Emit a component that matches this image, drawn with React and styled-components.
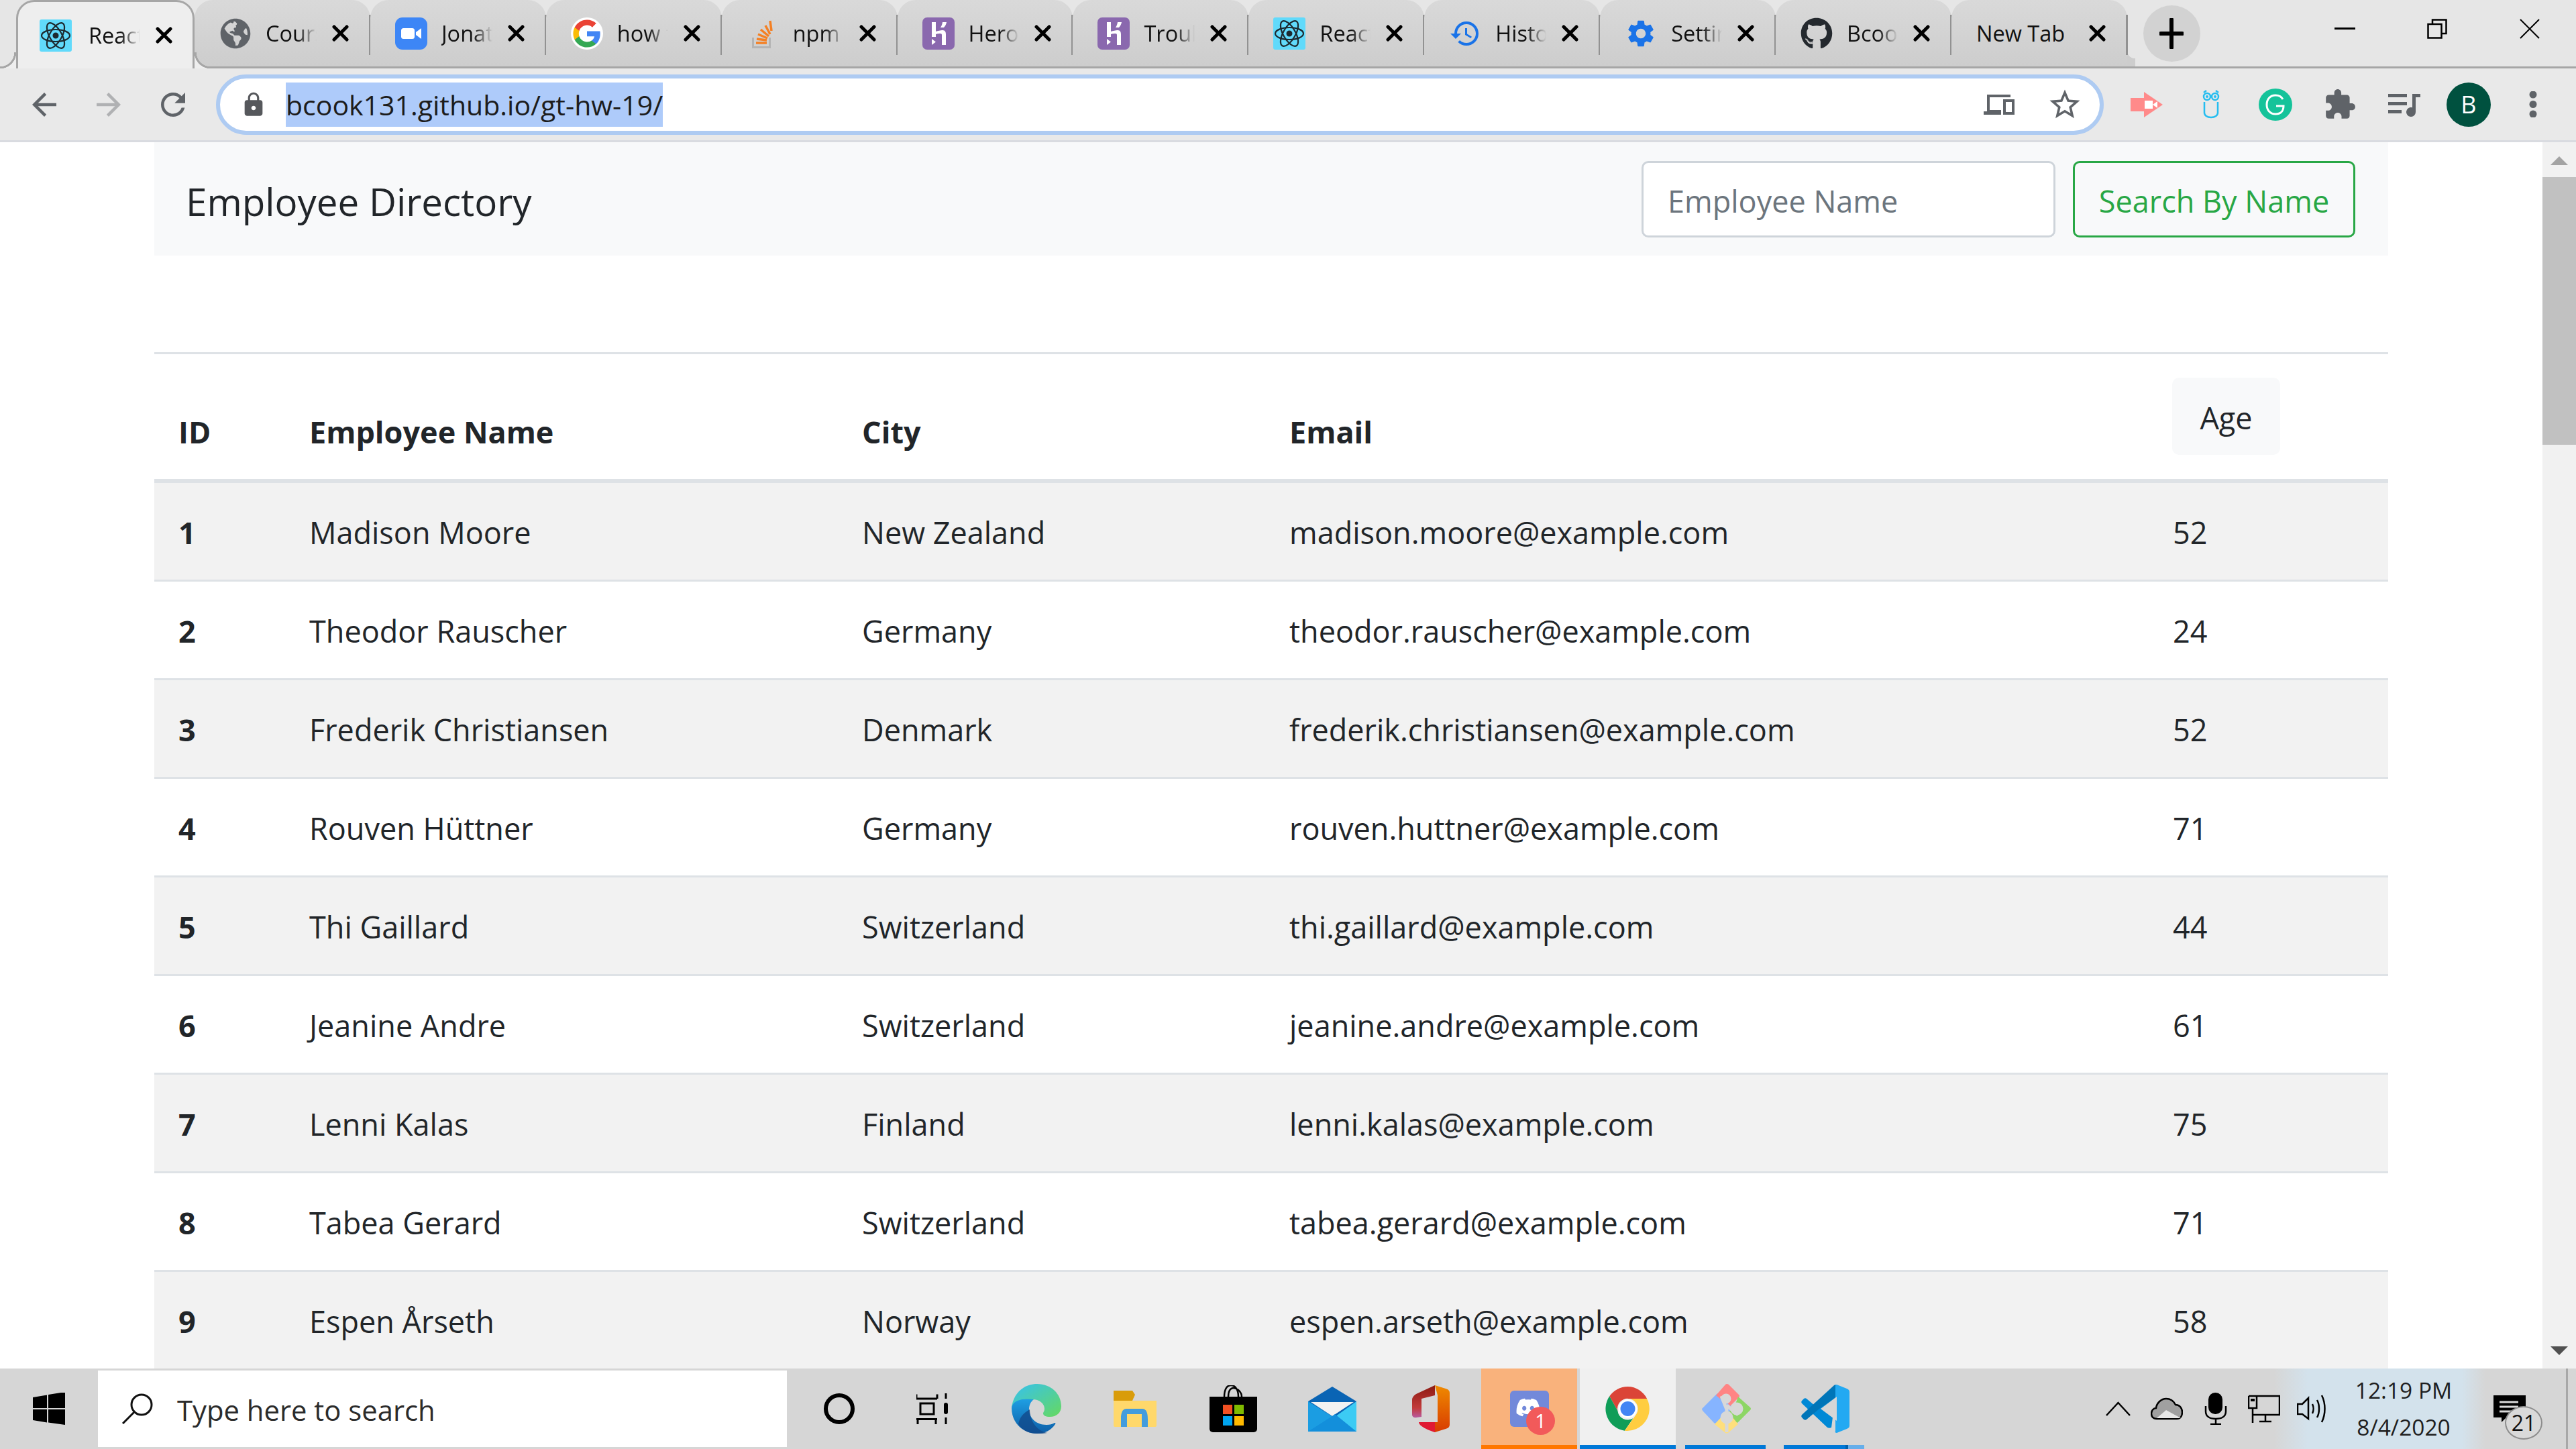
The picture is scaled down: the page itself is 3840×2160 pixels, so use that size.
import React from 'react';
import styled, { createGlobalStyle } from 'styled-components';
import { FaGithub, FaGlobeAmericas, FaDiscord } from 'react-icons/fa';
import { MdSettings, MdHistory, MdLock } from 'react-icons/md';

const GlobalStyle = createGlobalStyle`
  * {
    box-sizing: border-box;
  }
  html,
  body {
    margin: 0;
    height: 100%;
    overflow: hidden;
    background: #fff;
    font-family: 'Open Sans', 'Noto Sans', sans-serif;
    color: #212529;
  }
`;

const Screen = styled.div`
  height: 100vh;
  display: flex;
  flex-direction: column;
`;

/* browser tab strip */
const TabStrip = styled.div`
  flex: none;
  height: 102px;
  display: flex;
  padding-left: 24px;
  background: #e6e6e6;
  border-bottom: 3px solid #a6a6a6;
`;

const Tab = styled.div`
  position: relative;
  flex: none;
  display: flex;
  align-items: center;
  width: ${({ $active }) => ($active ? '266px' : '261.9px')};
  padding: ${({ $active }) => ($active ? '0 30px 0 32px' : '0 32px 0 37px')};
  margin-bottom: ${({ $active }) => ($active ? '-3px' : '0')};
  border-radius: 27px 27px 0 0;
  background: ${({ $active }) =>
    $active ? '#eeeeee' : 'linear-gradient(#d9d9d9, #cdcdcd)'};
  border: ${({ $active }) => ($active ? '3px solid #a6a6a6' : '0')};
  border-bottom: 0;
  z-index: ${({ $active }) => ($active ? 2 : 1)};

  &::after {
    content: '';
    position: absolute;
    display: ${({ $active }) => ($active ? 'none' : 'block')};
    right: -1px;
    top: 22px;
    width: 3px;
    height: 60px;
    background: #929292;
  }
  &:last-of-type::after {
    display: none;
  }
`;

const FlareLeft = styled.span`
  position: absolute;
  left: -27px;
  bottom: 0;
  width: 24px;
  height: 24px;
  background: radial-gradient(
    circle at 0 0,
    transparent 21px,
    #a6a6a6 21.5px,
    #a6a6a6 24px,
    #eeeeee 24.5px
  );
`;

const FlareRight = styled.span`
  position: absolute;
  right: -27px;
  bottom: 0;
  width: 24px;
  height: 24px;
  background: radial-gradient(
    circle at 100% 0,
    transparent 21px,
    #a6a6a6 21.5px,
    #a6a6a6 24px,
    #eeeeee 24.5px
  );
`;

const LastFlare = styled.span`
  position: absolute;
  right: -12px;
  bottom: 0;
  width: 12px;
  height: 24px;
  background: radial-gradient(circle at 100% 0, transparent 12px, #cdcdcd 12.5px);
`;

const Favicon = styled.span`
  flex: none;
  width: 48px;
  height: 48px;
  margin-right: ${({ $active }) => ($active ? '25px' : '21px')};
  display: flex;
  align-items: center;
  justify-content: center;
  color: ${({ $color }) => $color || '#5f6368'};
`;

const TabTitle = styled.span`
  flex: 1;
  min-width: 0;
  overflow: hidden;
  white-space: nowrap;
  font-size: 32.5px;
  line-height: 48px;
  color: #111;
  mask-image: ${({ $fade }) =>
    $fade ? 'linear-gradient(90deg, #000 62%, transparent 100%)' : 'none'};
`;

const CloseMark = styled.svg`
  flex: none;
  width: 25px;
  height: 25px;
  margin-left: 23px;
`;

const NewTabButton = styled.div`
  flex: none;
  width: 85px;
  height: 84px;
  margin: 8px 0 0 24px;
  border-radius: 50%;
  background: #d2d2d2;
  display: flex;
  align-items: center;
  justify-content: center;
`;

const WindowControls = styled.div`
  margin-left: auto;
  display: flex;
`;

const WindowButton = styled.div`
  width: 138px;
  height: 86px;
  display: flex;
  align-items: center;
  justify-content: center;
`;

/* address bar row */
const Toolbar = styled.div`
  flex: none;
  height: 110px;
  display: flex;
  align-items: center;
  padding: 0 16px 0 18px;
  background: #e9e9e9;
  border-bottom: 3px solid #d9dbe0;
`;

const ToolSlot = styled.div`
  flex: none;
  width: 96px;
  display: flex;
  align-items: center;
  justify-content: center;
`;

const AddressBar = styled.div`
  flex: 1;
  height: 90px;
  margin: 0 16px;
  display: flex;
  align-items: center;
  padding: 0 3px 0 30px;
  background: #fff;
  border: 6px solid #aecbf2;
  border-radius: 45px;
`;

const LockSlot = styled.span`
  flex: none;
  width: 40px;
  margin-right: 28px;
  display: flex;
  justify-content: center;
  color: #56585c;
`;

const Url = styled.span`
  background: #aecbfa;
  font-size: 41px;
  line-height: 66px;
  color: #1c1c1c;
  white-space: nowrap;
`;

const AddressActions = styled.div`
  margin-left: auto;
  display: flex;
  align-items: center;
`;

const AddressAction = styled.div`
  width: 98px;
  display: flex;
  justify-content: center;
`;

const Avatar = styled.div`
  width: 66px;
  height: 66px;
  border-radius: 50%;
  background: #00513f;
  color: #fff;
  font-size: 36px;
  line-height: 66px;
  text-align: center;
`;

/* page */
const Viewport = styled.div`
  flex: 1;
  min-height: 0;
  display: flex;
  overflow: hidden;
`;

const Page = styled.div`
  flex: 1;
  min-width: 0;
  padding: 0 230px;
`;

const Navbar = styled.div`
  height: 169px;
  display: flex;
  align-items: flex-start;
  padding: 28px 49px 0 47px;
  background: #f8f9fa;
`;

const Brand = styled.div`
  margin-right: auto;
  font-size: 56.5px;
  line-height: 122px;
`;

const NameInput = styled.input`
  width: 617px;
  height: 114px;
  padding: 4px 36px 0;
  background: #fff;
  border: 3px solid #ced4da;
  border-radius: 10px;
  font-family: inherit;
  font-size: 45px;
  color: #495057;
  outline: none;

  &::placeholder {
    color: #6c757d;
    opacity: 1;
  }
`;

const SearchButton = styled.button`
  width: 421px;
  height: 114px;
  margin-left: 26px;
  padding: 4px 0 0;
  background: transparent;
  border: 3px solid #28a745;
  border-radius: 10px;
  font-family: inherit;
  font-size: 45px;
  white-space: nowrap;
  color: #28a745;
`;

const Table = styled.table`
  width: 100%;
  margin-top: 144px;
  table-layout: fixed;
  border-collapse: separate;
  border-spacing: 0;
  font-size: 45px;
`;

const HeadCell = styled.th`
  width: ${({ $width }) => $width}px;
  height: 195px;
  padding: 0 34px 45px;
  border-top: 3px solid #dee2e6;
  border-bottom: 6px solid #dee2e6;
  text-align: left;
  vertical-align: bottom;
  font-weight: 700;
  line-height: 50px;

  &:first-child,
  &:last-child {
    padding-left: 36px;
  }
`;

const SortButton = styled.button`
  display: block;
  width: 161px;
  height: 115px;
  margin-bottom: -9px;
  margin-left: -1px;
  padding: 4px 0 0;
  background: #f8f9fa;
  border: 0;
  border-radius: 10px;
  font-family: inherit;
  font-size: 45px;
  color: #212529;
`;

const Row = styled.tr`
  background: ${({ $odd }) => ($odd ? '#f2f2f2' : '#fff')};

  & > td {
    height: 147px;
    border-top: 3px solid #dee2e6;
  }
  &:first-child > td {
    height: 144px;
    border-top: 0;
  }
`;

const Cell = styled.td`
  padding: 4px 34px 0;
  font-weight: ${({ $bold }) => ($bold ? 700 : 400)};
  line-height: 50px;
  white-space: nowrap;

  &:first-child,
  &:last-child {
    padding-left: 36px;
  }
`;

const Scrollbar = styled.div`
  flex: none;
  width: 50px;
  display: flex;
  flex-direction: column;
  align-items: center;
  padding: 21px 0 20px;
  background: #f1f1f1;
`;

const ScrollArrow = styled.div`
  flex: none;
  width: 0;
  height: 0;
  border-left: 13px solid transparent;
  border-right: 13px solid transparent;
  border-bottom: ${({ $up }) => ($up ? '13px solid #a3a3a3' : '0')};
  border-top: ${({ $up }) => ($up ? '0' : '13px solid #505050')};
`;

const ScrollThumb = styled.div`
  flex: none;
  width: 100%;
  height: 399px;
  margin: 18px 0 auto;
  background: #c1c1c1;
`;

/* windows taskbar */
const Taskbar = styled.div`
  position: relative;
  flex: none;
  height: 120px;
  display: flex;
  align-items: stretch;
  background: linear-gradient(
      90deg,
      transparent 3390px,
      #d3e2ec 3440px,
      #d3e2ec 3670px,
      transparent 3705px
    ),
    #d6d6d6;
`;

const StartSlot = styled.div`
  flex: none;
  width: 146px;
  display: flex;
  align-items: center;
  justify-content: center;
`;

const SearchBox = styled.div`
  flex: none;
  width: 1027px;
  margin: 3px 4px 3px 0;
  padding: 0 0 0 35px;
  display: flex;
  align-items: center;
  background: #fff;
`;

const SearchText = styled.span`
  margin: 2px 0 0 36px;
  font-size: 41.8px;
  color: #2b2b2b;
`;

const TaskSlot = styled.div`
  position: relative;
  flex: none;
  width: 147px;
  display: flex;
  align-items: center;
  justify-content: center;
  background: ${({ $state }) =>
    $state === 'flash' ? '#f9b27c' : $state === 'active' ? '#f0f0f0' : 'transparent'};
  border-left: ${({ $state }) =>
    $state === 'flash' || $state === 'active' ? '2px solid #d6d6d6' : '0'};
  border-right: ${({ $state }) =>
    $state === 'flash' || $state === 'active' ? '2px solid #d6d6d6' : '0'};

  &::after {
    content: '';
    position: absolute;
    display: ${({ $state }) => ($state ? 'block' : 'none')};
    bottom: 0;
    left: ${({ $state }) => ($state === 'running' || $state === 'wide' ? '12px' : '0')};
    right: ${({ $state }) => ($state === 'running' || $state === 'wide' ? '15px' : '0')};
    height: 6px;
    background: ${({ $state }) =>
      $state === 'flash'
        ? '#ff7700'
        : $state === 'wide'
          ? 'linear-gradient(90deg, #0078d7 77%, #0060ad 77%, #0060ad 80%, #66aeea 80%)'
          : '#0078d7'};
  }
`;

const DiscordGlyph = styled(FaDiscord)`
  position: absolute;
  left: 51px;
  top: 39px;
  color: #fff;
`;

const DiscordBadge = styled.span`
  position: absolute;
  left: 67px;
  top: 57px;
  width: 43px;
  height: 42px;
  border-radius: 50%;
  background: #f25a5a;
  color: #fff;
  font-size: 30px;
  line-height: 42px;
  text-align: center;
`;

const TrayIcons = styled.div`
  margin-left: auto;
  display: flex;
  align-items: stretch;
`;

const TraySlot = styled.div`
  width: 72.5px;
  display: flex;
  align-items: center;
  justify-content: center;
`;

const Clock = styled.div`
  width: 198px;
  display: flex;
  flex-direction: column;
  align-items: center;
  justify-content: center;
  font-size: 33.5px;
  line-height: 55px;
  color: #1f1f1f;
`;

const NotifySlot = styled.div`
  position: relative;
  width: 158px;
  padding-right: 40px;
  display: flex;
  align-items: center;
  justify-content: center;

  &::after {
    content: '';
    position: absolute;
    right: 12px;
    top: 0;
    bottom: 0;
    width: 3px;
    background: #a8a8a8;
  }
`;

const NotifyBadge = styled.span`
  position: absolute;
  left: 52px;
  top: 56px;
  width: 56px;
  height: 50px;
  border-radius: 50%;
  border: 2px solid #8d8d8d;
  background: #d9d9d9;
  color: #111;
  font-size: 32px;
  line-height: 46px;
  text-align: center;
`;

/* drawings */
const ReactIcon = () => (
  <svg width="48" height="48" viewBox="0 0 48 48">
    <rect width="48" height="48" rx="3" fill="#61dafb" />
    <g fill="none" stroke="#1d2a30" strokeWidth="2.2">
      <ellipse cx="24" cy="24" rx="21" ry="9" />
      <ellipse cx="24" cy="24" rx="21" ry="9" transform="rotate(60 24 24)" />
      <ellipse cx="24" cy="24" rx="21" ry="9" transform="rotate(120 24 24)" />
    </g>
    <circle cx="24" cy="24" r="4.5" fill="#1d2a30" />
  </svg>
);

const ZoomIcon = () => (
  <svg width="48" height="48" viewBox="0 0 48 48">
    <rect width="48" height="48" rx="11" fill="#3d86f6" />
    <rect x="9" y="16" width="20" height="16" rx="3.500" fill="#fff" />
    <path d="M31 22l8-6v16l-8-6z" fill="#fff" />
  </svg>
);

const GoogleIcon = () => (
  <svg width="48" height="48" viewBox="-2 -2 28 28">
    <circle cx="12" cy="12" r="14" fill="#fff" />
    <path fill="#4285F4" d="M23.49 12.27c0-.79-.07-1.54-.19-2.27H12v4.51h6.47c-.29 1.48-1.14 2.73-2.4 3.58v3h3.86c2.26-2.09 3.56-5.17 3.56-8.82z" />
    <path fill="#34A853" d="M12 24c3.24 0 5.95-1.08 7.93-2.91l-3.86-3c-1.08.72-2.45 1.16-4.07 1.16-3.13 0-5.78-2.11-6.73-4.96H1.29v3.09C3.26 21.3 7.31 24 12 24z" />
    <path fill="#FBBC05" d="M5.27 14.29c-.25-.72-.38-1.49-.38-2.29s.14-1.57.38-2.29V6.62H1.29C.47 8.24 0 10.06 0 12s.47 3.76 1.29 5.38l3.98-3.09z" />
    <path fill="#EA4335" d="M12 4.75c1.77 0 3.35.61 4.6 1.8l3.42-3.42C17.95 1.19 15.24 0 12 0 7.31 0 3.26 2.7 1.29 6.62l3.98 3.09C6.22 6.86 8.87 4.75 12 4.75z" />
  </svg>
);

const StackIcon = () => (
  <svg width="48" height="48" viewBox="0 0 48 48">
    <path d="M8 30v16h28V30h-3v13H11V30z" fill="#b4b4b4" />
    <g stroke="#f48024" strokeWidth="3.500">
      <path d="M14 38h16" />
      <path d="M15 32l15 2" />
      <path d="M17 25l14 6" />
      <path d="M21 18l12 10" />
      <path d="M28 12l7 13" />
      <path d="M35 5l2 15" />
    </g>
  </svg>
);

const HerokuIcon = () => (
  <svg width="48" height="48" viewBox="0 0 48 48">
    <rect width="48" height="48" rx="7" fill="#8a68ae" />
    <path d="M14 7h6v14c3-1 7-2 10-2 4 0 5 3 5 6v16h-6V26c0-2-2-2-3-2-3 0-6 1-6 1v4l-6 0z" fill="#fff" />
    <path d="M30 7h6c-.5 3-2 6-4 8h-5c1.500-2 2.500-5 3-8zM14 41v-9l6 4.500z" fill="#fff" />
  </svg>
);

const Cross = () => (
  <CloseMark viewBox="0 0 25 25">
    <path d="M3 3l19 19M22 3L3 22" stroke="#000" strokeWidth="5" strokeLinecap="round" />
  </CloseMark>
);

const GreyIcon = ({ d, size = 48, color = '#5f6368' }) => (
  <svg width={size} height={size} viewBox="0 0 24 24">
    <path d={d} fill={color} />
  </svg>
);

const BACK = 'M20 11H7.83l5.59-5.59L12 4l-8 8 8 8 1.41-1.41L7.83 13H20v-2z';
const FORWARD = 'M12 4l-1.41 1.41L16.17 11H4v2h12.17l-5.58 5.59L12 20l8-8z';
const RELOAD = 'M17.65 6.35A7.958 7.958 0 0 0 12 4c-4.42 0-7.99 3.58-7.99 8s3.57 8 7.99 8c3.73 0 6.84-2.55 7.73-6h-2.08A5.99 5.99 0 0 1 12 18c-3.31 0-6-2.69-6-6s2.69-6 6-6c1.66 0 3.14.69 4.22 1.78L13 11h7V4l-2.35 2.35z';
const STAR = 'M22 9.24l-7.19-.62L12 2 9.19 8.63 2 9.24l5.46 4.73L5.82 21 12 17.27 18.18 21l-1.63-7.03L22 9.24zM12 15.4l-3.76 2.27 1-4.28-3.32-2.88 4.38-.38L12 6.1l1.71 4.04 4.38.38-3.32 2.88 1 4.28L12 15.4z';
const PUZZLE = 'M20.5 11H19V7c0-1.1-.9-2-2-2h-4V3.5C13 2.12 11.88 1 10.5 1S8 2.12 8 3.5V5H4c-1.1 0-1.99.9-1.99 2v3.8H3.5c1.49 0 2.7 1.21 2.7 2.7s-1.21 2.7-2.7 2.7H2V20c0 1.1.9 2 2 2h3.8v-1.500c0-1.49 1.21-2.7 2.7-2.7 1.49 0 2.7 1.21 2.7 2.7V22H17c1.1 0 2-.9 2-2v-4h1.500c1.38 0 2.500-1.12 2.500-2.500S21.880 11 20.500 11z';

const DevicesIcon = () => (
  <svg width="46" height="30" viewBox="0 0 46 30">
    <path d="M5 0h35v4H9v19h17v7H0v-5h5z" fill="#5f6368" />
    <path fillRule="evenodd" d="M29 7h17v23H29zM33 11v15h9V11z" fill="#5f6368" />
  </svg>
);

const CamExtension = () => (
  <svg width="48" height="38" viewBox="0 0 48 38">
    <path d="M20 0l28 19-28 19v-9H0V9h20z" fill="#ff8a8a" />
    <path d="M21 13h12v12H21zM33 19l7-5v10z" fill="#fff" />
  </svg>
);

const OwlExtension = () => (
  <svg width="26" height="43" viewBox="0 0 26 43">
    <g fill="none" stroke="#25bdf0" strokeWidth="2.500">
      <circle cx="7" cy="10" r="5" />
      <circle cx="19" cy="10" r="5" />
      <path d="M2 4l4-3M24 4l-4-3" />
      <path d="M3 18v16c0 4 4 7 10 7s10-3 10-7V18" />
    </g>
    <circle cx="7" cy="10" r="2" fill="#25bdf0" />
    <circle cx="19" cy="10" r="2" fill="#25bdf0" />
  </svg>
);

const GrammarlyIcon = () => (
  <svg width="50" height="48" viewBox="0 0 50 48">
    <ellipse cx="25" cy="24" rx="25" ry="24" fill="#15c39a" />
    <path d="M36 16c-2-4-6-6-11-6-8 0-13 6-13 14s5 14 13 14 12-5 12-12H26" fill="none" stroke="#fff" strokeWidth="3" />
  </svg>
);

const MediaIcon = () => (
  <svg width="48" height="36" viewBox="0 0 48 36">
    <path d="M0 2h28v5H0zM0 14h28v5H0zM0 26h20v5H0z" fill="#5f6368" />
    <path d="M36 2h12v5h-7v22a7 7 0 1 1-5-6.700z" fill="#5f6368" />
  </svg>
);

const DotsIcon = () => (
  <svg width="12" height="39" viewBox="0 0 12 39">
    <circle cx="6" cy="5" r="5.500" fill="#5f6368" />
    <circle cx="6" cy="19.500" r="5.500" fill="#5f6368" />
    <circle cx="6" cy="34" r="5.500" fill="#5f6368" />
  </svg>
);

const WindowsLogo = () => (
  <svg width="48" height="48" viewBox="0 0 48 48">
    <path d="M0 7l21-3.500V23H0zM23 3l25-4v24H23zM0 25h21v19.500L0 41zM23 25h25v23l-25-3.500z" fill="#000" />
  </svg>
);

const Magnifier = () => (
  <svg width="47" height="46" viewBox="0 0 47 46">
    <circle cx="30" cy="17" r="15" fill="none" stroke="#111" strokeWidth="3" />
    <path d="M19 28L2 45" stroke="#111" strokeWidth="3" />
  </svg>
);

const CortanaRing = () => (
  <svg width="48" height="48" viewBox="0 0 48 48">
    <circle cx="24" cy="24" r="20" fill="none" stroke="#000" strokeWidth="6" />
  </svg>
);

const TaskViewIcon = () => (
  <svg width="63" height="46" viewBox="0 0 63 46">
    <g fill="none" stroke="#000" strokeWidth="3">
      <path d="M0 8h31M0 1.500v6.500M31 1.500v6.500" />
      <rect x="6" y="15" width="20" height="16" />
      <path d="M0 38.500h31M2 38.500v8M29 38.500v8" />
      <path d="M44 0v8M44 36v10" />
    </g>
    <rect x="41" y="14" width="6" height="17" rx="3" fill="#000" />
  </svg>
);

const EdgeIcon = () => (
  <svg width="74" height="74" viewBox="0 0 74 74">
    <defs>
      <linearGradient id="edgeTop" x1="0" y1="0" x2="1" y2="1">
        <stop offset="0" stopColor="#35c1f1" />
        <stop offset="1" stopColor="#66d95f" />
      </linearGradient>
      <linearGradient id="edgeLow" x1="0" y1="0" x2="0" y2="1">
        <stop offset="0" stopColor="#1f9fe3" />
        <stop offset="1" stopColor="#0c5ea8" />
      </linearGradient>
    </defs>
    <path d="M0 36C2 14 18 0 38 0c21 0 36 15 36 33 0 10-7 16-17 16-6 0-10-2-10-5 0-2 2-3 2-7 0-8-8-14-18-14C18 23 5 27 0 36z" fill="url(#edgeTop)" />
    <path d="M0 36c0 22 17 38 38 38 11 0 21-5 27-14 1-2 0-2-1-2-3 2-7 3-12 3-16 0-26-11-26-23 0-7 3-12 7-15C17 21 1 24 0 36z" fill="url(#edgeLow)" />
    <path d="M27 38c0 16 10 32 26 35-4 1-10 1-15 1-12 0-22-5-28-14 2-12 10-18 17-22z" fill="#114a8b" opacity=".8" />
  </svg>
);

const ExplorerIcon = () => (
  <svg width="64" height="54" viewBox="0 0 64 54">
    <path d="M0 0h28l4 6-4 9H0z" fill="#d99c0a" />
    <path d="M0 15h64v37a2 2 0 0 1-2 2H2a2 2 0 0 1-2-2z" fill="#ffd86b" />
    <path d="M11 42c0-3 0-15 8-15h24c8 0 8 12 8 15v12h-9V35H20v19h-9z" fill="#439cdd" />
  </svg>
);

const StoreIcon = () => (
  <svg width="71" height="70" viewBox="0 0 71 70">
    <path d="M22 17C22 6 26 0 32 0s11 6 11 17M28 17C28 9 31 4 36 4s12 6 12 13" fill="none" stroke="#000" strokeWidth="2.500" />
    <path d="M0 17h71v48a5 5 0 0 1-5 5H5a5 5 0 0 1-5-5z" fill="#000" />
    <rect x="20" y="29" width="14" height="14" fill="#f25022" />
    <rect x="37" y="29" width="14" height="14" fill="#7fba00" />
    <rect x="20" y="46" width="14" height="14" fill="#00a4ef" />
    <rect x="37" y="46" width="14" height="14" fill="#ffb900" />
  </svg>
);

const MailIcon = () => (
  <svg width="72" height="67" viewBox="0 0 72 67">
    <path d="M36 0l36 22v45H0V22z" fill="#0a64b4" />
    <path d="M4 23h64L36 44z" fill="#f2f2f2" />
    <path d="M0 22v45h72z" fill="#1b9de2" />
    <path d="M40 45l32-23v45z" fill="#3ccbf4" />
    <path d="M0 67h72L40 41l-4 3z" fill="#138fdb" />
  </svg>
);

const OfficeIcon = () => (
  <svg width="56" height="70" viewBox="0 0 56 70">
    <defs>
      <linearGradient id="officeRight" x1="0" y1="0" x2="0" y2="1">
        <stop offset="0" stopColor="#ef8a00" />
        <stop offset="1" stopColor="#d83b01" />
      </linearGradient>
      <linearGradient id="officeLeft" x1="0" y1="0" x2="0" y2="1">
        <stop offset="0" stopColor="#8c1a12" />
        <stop offset=".7" stopColor="#c23a3a" />
        <stop offset="1" stopColor="#b85ba0" />
      </linearGradient>
    </defs>
    <path d="M34 0l16 5c4 1 6 3 6 7v46c0 4-2 6-6 7l-16 5c-6-3-10-6-10-9V55h14V15L34 0z" fill="url(#officeRight)" />
    <path d="M34 0v15L14 20v27l-7 1c-4 1-7-1-7-4V22c0-4 2-6 6-9z" fill="url(#officeLeft)" />
    <path d="M10 55h24v15c-10-3-24-9-24-15z" fill="#e01a33" />
  </svg>
);

const DiscordTile = () => (
  <svg width="58" height="54" viewBox="0 0 58 54">
    <rect width="58" height="54" rx="6" fill="#7289da" />
  </svg>
);

const ChromeIcon = () => (
  <svg width="67" height="66" viewBox="0 0 24 24">
    <path d="M12 0C7.900 0 4.300 2.100 2.100 5.200l4.400 7.900A5.500 5.500 0 0 1 12 6.500h10.400C20.500 2.700 16.500 0 12 0z" fill="#db4437" />
    <path d="M2.100 5.200A12 12 0 0 0 10.300 23.900l4.600-6.700a5.500 5.500 0 0 1-8.400-4.100z" fill="#0f9d58" />
    <path d="M22.400 6.500H12a5.500 5.500 0 0 1 4.700 8.300L10.300 23.900A12 12 0 0 0 22.400 6.500z" fill="#ffcd40" />
    <circle cx="12" cy="12" r="5" fill="#fff" />
    <circle cx="12" cy="12" r="4" fill="#4285f4" />
  </svg>
);

const GitKrakenIcon = () => (
  <svg width="74" height="74" viewBox="0 0 74 74">
    <path d="M0 37l22-22q3-2 5 0l17 18q2 2 0 5L22 58q-2 2-4 0L2 41q-2-2-2-4z" fill="#86b4ff" />
    <path d="M37 0q2 0 3 1l15 15q2 2 0 4L42 33l-6-7-6-7-3 3-6-5 14-16q1-1 2-1z" fill="#ff8484" />
    <path d="M54 19l18 16q2 2 0 4L54 57q-2 2-4 0L39 44 50 30z" fill="#8dd665" />
    <path d="M19 60l15-16h7l13 16-15 13q-2 1-4 0z" fill="#ffdf7c" />
    <g fill="none" stroke="#d8d8d8" strokeWidth="5">
      <path d="M37 72V38L29 18M37 32l17 14" />
      <circle cx="37" cy="50" r="7" fill="#d8d8d8" />
      <circle cx="52" cy="37" r="7" fill="#d8d8d8" />
      <circle cx="36" cy="22" r="5" fill="#d8d8d8" />
    </g>
  </svg>
);

const VsCodeIcon = () => (
  <svg width="72" height="72" viewBox="0 0 72 72">
    <path d="M53 2l-32 30-13-11c-1-1-3-1-4 0l-3 3c-1 1-1 3 0 4l37 35c2 2 4 2 7 1z" fill="#0089d6" />
    <path d="M53 18L27 36 8 52c-1 1-3 1-4 0l-3-3c-1-1-1-3 0-4L48 2c2-2 3-2 5-1z" fill="#0075b8" />
    <path d="M53 0l15 6c3 1 4 3 4 5v50c0 2-1 4-4 5l-15 6c-2 0-3-1-2-3V3c0-2 0-3 2-3z" fill="#23a9f2" />
    <path d="M53 18v36L29 36z" fill="#d6d6d6" />
  </svg>
);

const CloudIcon = () => (
  <svg width="48" height="34" viewBox="0 0 48 34">
    <path d="M9 32C3 32 1 28 1 24s3-8 7-8c1-8 8-14 15-14 6 0 11 3 14 9 6 0 10 5 10 11 0 6-3 10-8 10z" fill="#a0a0a0" stroke="#000" strokeWidth="2.500" />
    <path d="M9 31l14-12 22 12z" fill="#e8e8e8" />
  </svg>
);

const MicIcon = () => (
  <svg width="34" height="48" viewBox="0 0 34 48">
    <rect x="6" y="0" width="21" height="32" rx="10" fill="#000" />
    <path d="M2 20v8c0 8 7 11 15 11s15-3 15-11v-8M17 39v8M9 47h16" fill="none" stroke="#000" strokeWidth="2.500" />
  </svg>
);

const NetworkIcon = () => (
  <svg width="48" height="42" viewBox="0 0 48 42">
    <g fill="none" stroke="#000" strokeWidth="2.500">
      <path d="M1 2h46v28H7M1 2v18h12V2M7 20v22" />
      <path d="M26 30v9M17 40h18" />
    </g>
    <rect x="4" y="6" width="6" height="4" fill="#000" />
  </svg>
);

const SpeakerIcon = () => (
  <svg width="48" height="44" viewBox="0 0 48 44">
    <g fill="none" stroke="#000" strokeWidth="2.500">
      <path d="M1 15h7l9-9v31l-9-7H1z" />
      <path d="M23 15c2 4 2 10 0 14M30 9c4 7 4 19 0 26M37 2c6 12 6 28 0 40" />
    </g>
  </svg>
);

const NotifyIcon = () => (
  <svg width="48" height="40" viewBox="0 0 48 40">
    <path d="M0 0h48v33H19l-7 7v-7H0z" fill="#000" />
    <path d="M9 10h28M9 17h28M9 24h20" stroke="#d9d9d9" strokeWidth="3" />
  </svg>
);

const tabs = [
  { title: 'React App', icon: <ReactIcon />, active: true },
  { title: 'Courses', icon: <FaGlobeAmericas size={46} /> },
  { title: 'Jonathan', icon: <ZoomIcon /> },
  { title: 'how to', icon: <GoogleIcon /> },
  { title: 'npm', icon: <StackIcon /> },
  { title: 'Heroku', icon: <HerokuIcon /> },
  { title: 'Troubleshooting', icon: <HerokuIcon /> },
  { title: 'React App', icon: <ReactIcon /> },
  { title: 'History', icon: <MdHistory size={56} />, color: '#1a73e8' },
  { title: 'Settings', icon: <MdSettings size={56} />, color: '#1a73e8' },
  { title: 'Bcook131', icon: <FaGithub size={48} />, color: '#24292e' },
  { title: 'New Tab' },
];

const employees = [
  [1, 'Madison Moore', 'New Zealand', 'madison.moore@example.com', 52],
  [2, 'Theodor Rauscher', 'Germany', 'theodor.rauscher@example.com', 24],
  [3, 'Frederik Christiansen', 'Denmark', 'frederik.christiansen@example.com', 52],
  [4, 'Rouven Hüttner', 'Germany', 'rouven.huttner@example.com', 71],
  [5, 'Thi Gaillard', 'Switzerland', 'thi.gaillard@example.com', 44],
  [6, 'Jeanine Andre', 'Switzerland', 'jeanine.andre@example.com', 61],
  [7, 'Lenni Kalas', 'Finland', 'lenni.kalas@example.com', 75],
  [8, 'Tabea Gerard', 'Switzerland', 'tabea.gerard@example.com', 71],
  [9, 'Espen Årseth', 'Norway', 'espen.arseth@example.com', 58],
];

export default function App() {
  return (
    <Screen>
      <GlobalStyle />
      <TabStrip>
        {tabs.map((tab, i) => (
          <Tab key={i} $active={tab.active}>
            {tab.active && <FlareLeft />}
            {tab.active && <FlareRight />}
            {i === tabs.length - 1 && <LastFlare />}
            {tab.icon && (
              <Favicon $active={tab.active} $color={tab.color}>
                {tab.icon}
              </Favicon>
            )}
            <TabTitle $fade={!!tab.icon}>{tab.title}</TabTitle>
            <Cross />
          </Tab>
        ))}
        <NewTabButton>
          <svg width="36" height="46" viewBox="0 0 36 46">
            <path d="M18 2v42M2 23h32" stroke="#000" strokeWidth="6" strokeLinecap="round" />
          </svg>
        </NewTabButton>
        <WindowControls>
          <WindowButton>
            <svg width="31" height="4" viewBox="0 0 31 4">
              <rect width="31" height="3" fill="#000" />
            </svg>
          </WindowButton>
          <WindowButton>
            <svg width="30" height="30" viewBox="0 0 30 30">
              <path d="M1.500 8h20v20.500h-20zM8 8V1.500h20.500V22H22" fill="none" stroke="#000" strokeWidth="2.500" />
            </svg>
          </WindowButton>
          <WindowButton>
            <svg width="30" height="30" viewBox="0 0 30 30">
              <path d="M1 1l28 28M29 1L1 29" stroke="#000" strokeWidth="2" />
            </svg>
          </WindowButton>
        </WindowControls>
      </TabStrip>

      <Toolbar>
        <ToolSlot><GreyIcon d={BACK} size={54} /></ToolSlot>
        <ToolSlot><GreyIcon d={FORWARD} size={54} color="#b0b1b3" /></ToolSlot>
        <ToolSlot><GreyIcon d={RELOAD} size={54} /></ToolSlot>
        <AddressBar>
          <LockSlot><MdLock size={40} /></LockSlot>
          <Url>bcook131.github.io/gt-hw-19/</Url>
          <AddressActions>
            <AddressAction><DevicesIcon /></AddressAction>
            <AddressAction><GreyIcon d={STAR} size={54} /></AddressAction>
          </AddressActions>
        </AddressBar>
        <ToolSlot><CamExtension /></ToolSlot>
        <ToolSlot><OwlExtension /></ToolSlot>
        <ToolSlot><GrammarlyIcon /></ToolSlot>
        <ToolSlot><GreyIcon d={PUZZLE} size={50} /></ToolSlot>
        <ToolSlot><MediaIcon /></ToolSlot>
        <ToolSlot><Avatar>B</Avatar></ToolSlot>
        <ToolSlot><DotsIcon /></ToolSlot>
      </Toolbar>

      <Viewport>
        <Page>
          <Navbar>
            <Brand>Employee Directory</Brand>
            <NameInput placeholder="Employee Name" />
            <SearchButton>Search By Name</SearchButton>
          </Navbar>
          <Table>
            <thead>
              <tr>
                <HeadCell $width={197}>ID</HeadCell>
                <HeadCell $width={824}>Employee Name</HeadCell>
                <HeadCell $width={637}>City</HeadCell>
                <HeadCell $width={1315}>Email</HeadCell>
                <HeadCell $width={357}>
                  <SortButton>Age</SortButton>
                </HeadCell>
              </tr>
            </thead>
            <tbody>
              {employees.map(([id, name, city, email, age]) => (
                <Row key={id} $odd={id % 2 === 1}>
                  <Cell $bold>{id}</Cell>
                  <Cell>{name}</Cell>
                  <Cell>{city}</Cell>
                  <Cell>{email}</Cell>
                  <Cell>{age}</Cell>
                </Row>
              ))}
            </tbody>
          </Table>
        </Page>
        <Scrollbar>
          <ScrollArrow $up />
          <ScrollThumb />
          <ScrollArrow />
        </Scrollbar>
      </Viewport>

      <Taskbar>
        <StartSlot><WindowsLogo /></StartSlot>
        <SearchBox>
          <Magnifier />
          <SearchText>Type here to search</SearchText>
        </SearchBox>
        <TaskSlot><CortanaRing /></TaskSlot>
        <TaskSlot><TaskViewIcon /></TaskSlot>
        <TaskSlot><EdgeIcon /></TaskSlot>
        <TaskSlot><ExplorerIcon /></TaskSlot>
        <TaskSlot><StoreIcon /></TaskSlot>
        <TaskSlot><MailIcon /></TaskSlot>
        <TaskSlot><OfficeIcon /></TaskSlot>
        <TaskSlot $state="flash">
          <DiscordTile />
          <DiscordGlyph size={38} />
          <DiscordBadge>1</DiscordBadge>
        </TaskSlot>
        <TaskSlot $state="active"><ChromeIcon /></TaskSlot>
        <TaskSlot $state="running"><GitKrakenIcon /></TaskSlot>
        <TaskSlot $state="wide"><VsCodeIcon /></TaskSlot>
        <TrayIcons>
          <TraySlot>
            <svg width="37" height="22" viewBox="0 0 37 22">
              <path d="M1 21L18.500 2 36 21" fill="none" stroke="#000" strokeWidth="2.500" />
            </svg>
          </TraySlot>
          <TraySlot><CloudIcon /></TraySlot>
          <TraySlot><MicIcon /></TraySlot>
          <TraySlot><NetworkIcon /></TraySlot>
          <TraySlot><SpeakerIcon /></TraySlot>
          <Clock>
            <span>12:19 PM</span>
            <span>8/4/2020</span>
          </Clock>
          <NotifySlot>
            <NotifyIcon />
            <NotifyBadge>21</NotifyBadge>
          </NotifySlot>
        </TrayIcons>
      </Taskbar>
    </Screen>
  );
}
